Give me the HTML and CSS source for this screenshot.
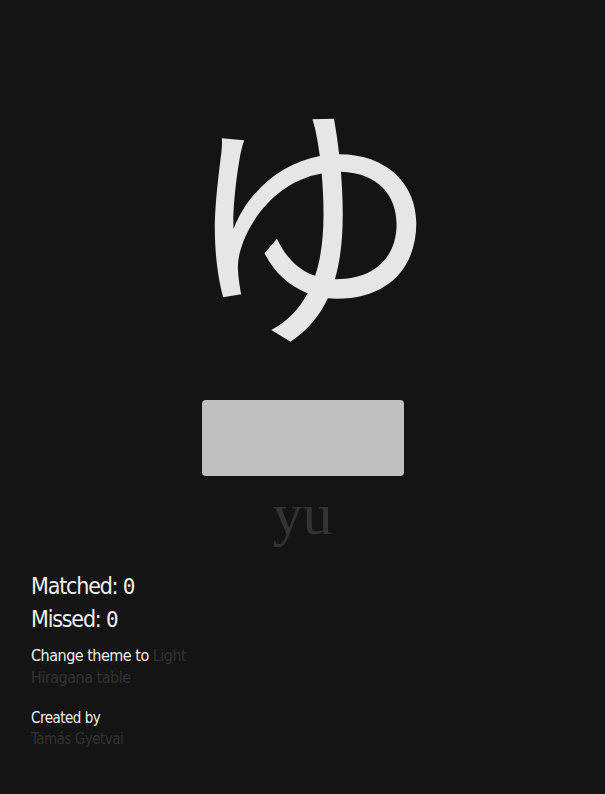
FILE: index.html
```html
<!DOCTYPE html>
<html lang="en">
<head>
<meta charset="utf-8">
<link rel="stylesheet" href="styles.css">
</head>
<body>
<main class="game">
  <div class="kana">ゆ</div>
  <div class="answer"></div>
  <div class="romaji">yu</div>
</main>
<section class="info">
  <div class="stat">Matched: <span class="num">0</span></div>
  <div class="stat">Missed: <span class="num">0</span></div>
  <div class="links">
    <div>Change theme to <a class="link">Light</a></div>
    <div><a class="link">Hiragana table</a></div>
  </div>
  <div class="credit">
    <div>Created by</div>
    <div><a class="link">Tamás Gyetvai</a></div>
  </div>
</section>
</body>
</html>
```
FILE: styles.css
```css
html, body {
  margin: 0;
  background: #141414;
  color: #f0f0f0;
  font-family: "DejaVu Sans Condensed", "DejaVu Sans", sans-serif;
}
.game {
  display: flex;
  flex-direction: column;
  align-items: center;
  padding-top: 72px;
}
.kana {
  font-family: "Noto Sans CJK JP", sans-serif;
  font-size: 260px;
  line-height: 280px;
  color: #e6e6e6;
  margin-left: 16px;
}
.answer {
  margin-top: 48px;
  width: 202px;
  height: 76px;
  background: #c0c0c0;
  border-radius: 4px;
  margin-left: 1px;
}
.romaji {
  font-family: "Liberation Serif", serif;
  font-size: 60px;
  line-height: 60px;
  color: #333;
  margin-top: 8px;
}
.info {
  padding: 26px 0 0 31px;
}
.stat {
  font-size: 23px;
  line-height: 32px;
  letter-spacing: -1.2px;
}
.num {
  font-family: "DejaVu Sans Mono", monospace;
  font-size: 21px;
  letter-spacing: 0;
}
.links {
  margin-top: 9px;
  font-size: 16px;
  line-height: 22px;
  letter-spacing: -0.5px;
}
.credit {
  margin-top: 19px;
  font-size: 15px;
  line-height: 21px;
  letter-spacing: -0.5px;
}
.link {
  color: #333;
}
```
